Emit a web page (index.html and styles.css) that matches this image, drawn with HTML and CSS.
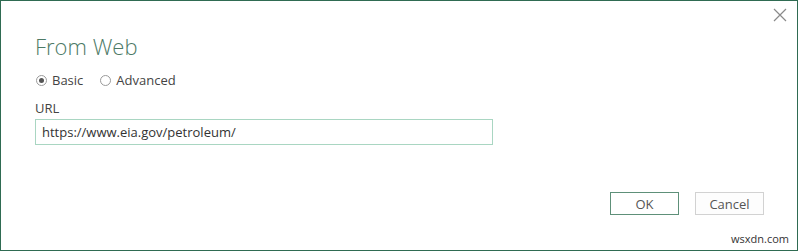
FILE: index.html
```html
<!DOCTYPE html>
<html>
<head>
<meta charset="utf-8">
<link rel="stylesheet" href="styles.css">
</head>
<body>
<div class="window">
  <div class="close" aria-label="Close">
    <svg width="14" height="14" viewBox="0 0 14 14"><path d="M1 1 L13 13 M13 1 L1 13" stroke="#8a8a8a" stroke-width="1.2" fill="none"/></svg>
  </div>
  <div class="content">
    <h1 class="title">From Web</h1>
    <div class="radios">
      <label class="radio"><span class="dot checked"></span>Basic</label>
      <label class="radio"><span class="dot"></span>Advanced</label>
    </div>
    <div class="field-label">URL</div>
    <div class="input">https://www.eia.gov/petroleum/</div>
  </div>
  <div class="buttons">
    <button class="btn primary">OK</button>
    <button class="btn">Cancel</button>
  </div>
  <div class="watermark">wsxdn.com</div>
</div>
</body>
</html>
```
FILE: styles.css
```css
html, body {
  margin: 0;
  padding: 0;
  background: #ffffff;
}
body {
  font-family: "Open Sans", "Noto Sans", sans-serif;
  color: #444;
}
.window {
  position: relative;
  box-sizing: border-box;
  width: 798px;
  height: 251px;
  border: 1px solid #2f6b52;
  background: #fff;
}
.close {
  position: absolute;
  top: 7px;
  right: 10px;
  width: 14px;
  height: 14px;
}
.close svg { display: block; }
.content {
  padding: 30px 0 0 34px;
}
.title {
  margin: 0;
  font-weight: 300;
  font-size: 22px;
  line-height: 30px;
  color: #4d7a66;
}
.radios {
  display: flex;
  gap: 16px;
  margin-top: 10px;
  height: 18px;
  align-items: center;
}
.radio {
  display: flex;
  align-items: center;
  font-size: 13px;
  color: #444;
}
.dot {
  box-sizing: border-box;
  width: 11px;
  height: 11px;
  border: 1px solid #9a9a9a;
  border-radius: 50%;
  margin: 0 5px 0 1px;
  position: relative;
}
.dot.checked::after {
  content: "";
  position: absolute;
  left: 2px;
  top: 2px;
  width: 5px;
  height: 5px;
  border-radius: 50%;
  background: #555;
}
.field-label {
  margin-top: 10px;
  font-size: 13px;
  line-height: 18px;
  color: #444;
}
.input {
  box-sizing: border-box;
  margin-top: 2px;
  width: 458px;
  height: 26px;
  border: 1px solid #a9d6c2;
  padding: 0 6px;
  font-size: 13px;
  line-height: 24px;
  color: #333;
}
.buttons {
  position: absolute;
  right: 33px;
  top: 191px;
  display: flex;
  gap: 16px;
}
.btn {
  box-sizing: border-box;
  width: 69px;
  height: 23px;
  font-family: inherit;
  font-size: 13px;
  color: #555;
  background: #fdfdfd;
  border: 1px solid #d2d2d2;
  padding: 0;
}
.btn.primary {
  border: 1px solid #5e9079;
  background: #fff;
}
.watermark {
  position: absolute;
  right: 8px;
  bottom: 4px;
  font-size: 11px;
  color: #333;
}
```
